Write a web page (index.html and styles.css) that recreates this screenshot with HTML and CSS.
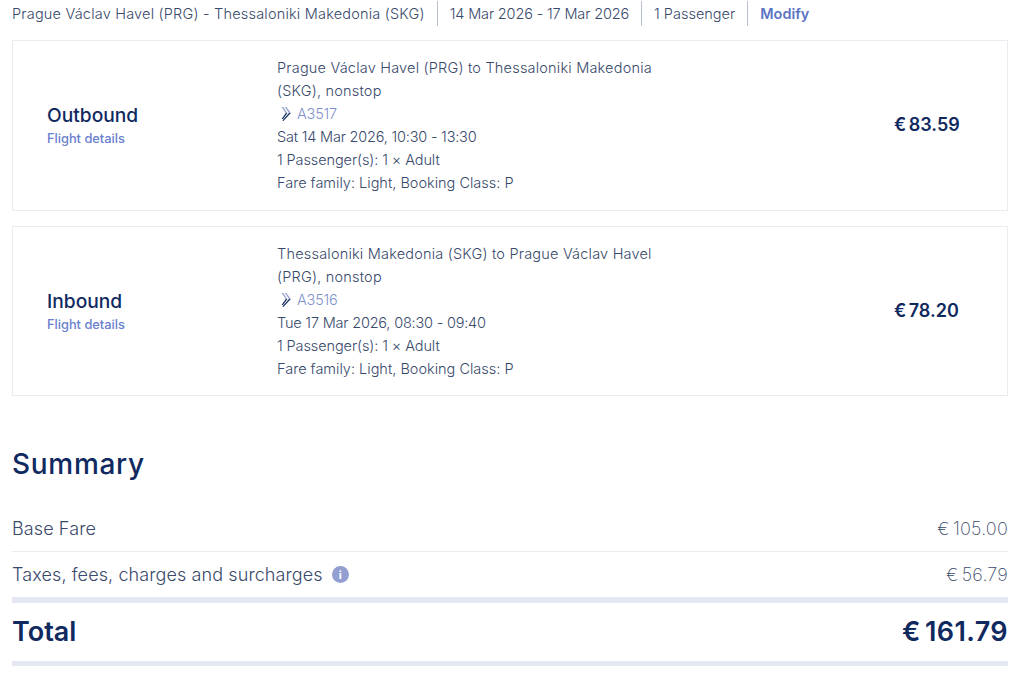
FILE: index.html
```html
<!DOCTYPE html>
<html lang="en">
<head>
<meta charset="utf-8">
<title>Booking summary</title>
<link rel="stylesheet" href="styles.css">
</head>
<body>
<main class="page">
  <header class="topbar">
    <span class="crumb route">Prague Václav Havel (PRG) - Thessaloniki Makedonia (SKG)</span>
    <span class="crumb dates">14 Mar 2026 - 17 Mar 2026</span>
    <span class="crumb pax">1 Passenger</span>
    <a class="crumb modify">Modify</a>
  </header>

  <section class="card">
    <div class="leg"><h2 class="leg-title">Outbound</h2><a class="leg-link">Flight details</a></div>
    <div class="info">
      <p>Prague Václav Havel (PRG) to Thessaloniki Makedonia (SKG), nonstop</p>
      <p class="flight"><svg class="logo" viewBox="0 0 10 15" aria-hidden="true"><path class="logo-a" d="M0.5 1 L2.2 1 L6.4 7 L4.8 7 Z M3.8 1 L5.5 1 L9.8 7 L8 7 Z"/><path class="logo-b" d="M4.8 7 L6.4 7 L2 13 L0.6 13 Z M8 7 L9.8 7 L2.4 15 L1.4 14.6 Z"/></svg>A3517</p>
      <p class="time">Sat 14 Mar 2026, 10:30 - 13:30</p>
      <p class="pax-line">1 Passenger(s): 1 × Adult</p>
      <p class="fare">Fare family: Light, Booking Class: P</p>
    </div>
    <div class="price">€ 83.59</div>
  </section>

  <section class="card card-in">
    <div class="leg"><h2 class="leg-title">Inbound</h2><a class="leg-link">Flight details</a></div>
    <div class="info">
      <p>Thessaloniki Makedonia (SKG) to Prague Václav Havel (PRG), nonstop</p>
      <p class="flight"><svg class="logo" viewBox="0 0 10 15" aria-hidden="true"><path class="logo-a" d="M0.5 1 L2.2 1 L6.4 7 L4.8 7 Z M3.8 1 L5.5 1 L9.8 7 L8 7 Z"/><path class="logo-b" d="M4.8 7 L6.4 7 L2 13 L0.6 13 Z M8 7 L9.8 7 L2.4 15 L1.4 14.6 Z"/></svg>A3516</p>
      <p class="time">Tue 17 Mar 2026, 08:30 - 09:40</p>
      <p class="pax-line">1 Passenger(s): 1 × Adult</p>
      <p class="fare">Fare family: Light, Booking Class: P</p>
    </div>
    <div class="price">€ 78.20</div>
  </section>

  <h1 class="summary-title">Summary</h1>
  <div class="row row-base"><span>Base Fare</span><span class="amount">€ 105.00</span></div>
  <div class="row row-tax"><span class="tax-label">Taxes, fees, charges and surcharges<i class="info-dot">i</i></span><span class="amount">€ 56.79</span></div>
  <div class="total"><span>Total</span><span class="total-amount">€ 161.79</span></div>
</main>
</body>
</html>
```
FILE: styles.css
```css
* { box-sizing: border-box; }
html, body { margin: 0; padding: 0; background: #fff; }
body { font-family: "Inter", "Liberation Sans", sans-serif; font-weight: 300; color: #38496b; height: 687px; overflow: hidden; }
.page { padding: 0 16px 0 12px; }
p, h1, h2 { margin: 0; font-weight: 300; }

.topbar { display: flex; align-items: center; height: 26px; margin-bottom: 14px; font-size: 14.5px; }
.crumb { padding: 0 12px; border-left: 1px solid #b9c1cd; line-height: 25px; }
.route { padding-left: 0; border-left: 0; letter-spacing: 0.2px; }
.dates { letter-spacing: -0.15px; }
.modify { color: #5b74c4; font-weight: 600; }

.card { display: flex; align-items: center; height: 171px; margin-bottom: 15px; border: 1px solid #e9ecf0; }
.card-in { height: 170px; }
.leg { width: 264px; padding-left: 34px; }
.card-in .leg { padding-top: 1px; }
.leg-title { font-size: 19.2px; line-height: 24px; font-weight: 500; color: #10295f; }
.leg-link { display: block; margin-top: 3px; font-size: 12.8px; line-height: 18px; font-weight: 500; color: #6880cf; }
.card .leg-link { position: relative; }
.info { width: 385px; margin-top: -2px; font-size: 14.5px; line-height: 23px; letter-spacing: 0.2px; color: #38496b; }
.card-in .info { margin-top: 0; }
.time { letter-spacing: -0.2px; }
.pax-line { letter-spacing: -0.1px; }
.fare { letter-spacing: 0; }
.flight { display: flex; align-items: center; color: #7f91cc; padding-left: 4px; letter-spacing: -0.2px; }
.logo { width: 10px; height: 15px; margin-right: 6px; }
.logo-a { fill: #9aa6cf; }
.logo-b { fill: #10295f; }
.price { margin: -2px 0 0 auto; width: 114px; font-size: 18px; font-weight: 600; color: #10295f; word-spacing: -2px; }
.price { padding-left: 1px; }

.summary-title { margin-top: 50px; font-size: 28px; line-height: 36px; font-weight: 500; letter-spacing: 0.7px; color: #10295f; }
.row { display: flex; justify-content: space-between; align-items: center; font-size: 18px; letter-spacing: 0.1px; color: #38496b; }
.row-base { height: 46px; margin-top: 24px; border-bottom: 1px solid #e8ebef; }
.row-tax { height: 45px; }
.tax-label { display: flex; align-items: center; }
.amount { font-weight: 200; letter-spacing: 0.2px; word-spacing: -2px; }
.info-dot { display: flex; align-items: center; justify-content: center; width: 17px; height: 17px; margin-left: 9px; border-radius: 50%; background: #929fd0; color: #fff; font-size: 11px; font-style: normal; font-weight: 700; }
.total { display: flex; justify-content: space-between; align-items: center; height: 69px; padding-bottom: 2px; border-top: 6px solid #e3e8f1; border-bottom: 5px solid #e3e8f1; font-size: 27px; font-weight: 600; color: #10295f; }
.total-amount { letter-spacing: 0.4px; word-spacing: -3px; }
```
